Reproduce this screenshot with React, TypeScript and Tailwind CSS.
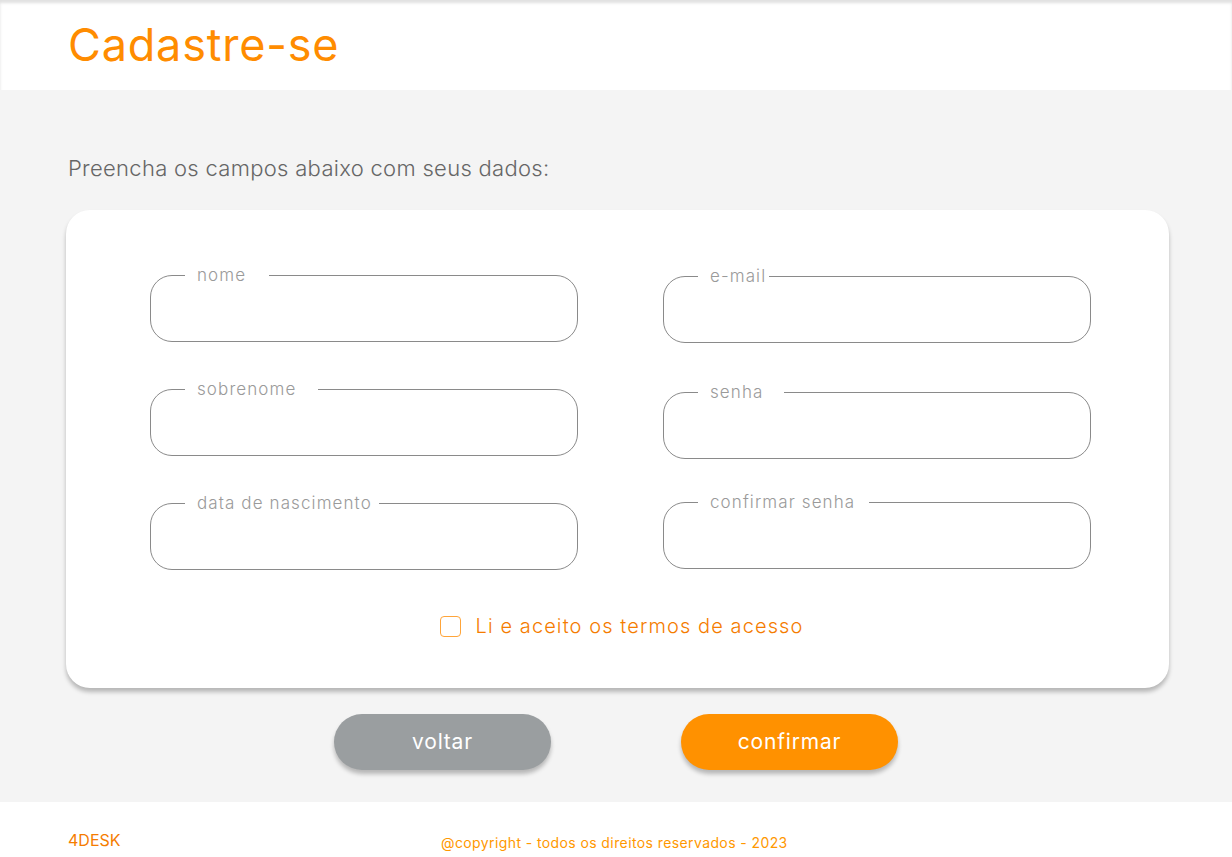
import React from "react";

const font = { fontFamily: "Inter, 'Open Sans', sans-serif" };

function Field({ label, pr, className = "" }: { label: string; pr: string; className?: string }) {
  return (
    <fieldset className={`h-[75px] rounded-[22px] border border-[#8a8a8a] px-[34px] ${className}`}>
      <legend className={`pl-[12px] ${pr} text-[17px] font-light leading-[16px] tracking-[1.1px] text-[#9a9a9a]`}>{label}</legend>
    </fieldset>
  );
}

export default function App() {
  return (
    <div style={font} className="min-h-[857px] w-full bg-white">
      <header className="h-[90px] bg-white shadow-[inset_0_3px_3px_rgba(0,0,0,0.12)] px-[68px] pt-[19px]">
        <h1 className="text-[45px] leading-[52px] font-normal tracking-[0.8px] text-[#ff8c00]">Cadastre-se</h1>
      </header>
      <main className="h-[712px] bg-[#f4f4f4] px-[66px] pt-[64px]">
        <p className="pl-[2px] text-[22px] font-light leading-[28px] tracking-[0.3px] text-[#666666]">Preencha os campos abaixo com seus dados:</p>
        <div className="mt-[28px] h-[478px] w-[1103px] rounded-[24px] bg-white shadow-[0_4px_4px_rgba(0,0,0,0.25)] pt-[57px]">
          <div className="grid grid-cols-[428px_428px] gap-x-[85px] pl-[84px]">
            <div className="flex flex-col gap-[39px]">
              <Field label="nome" pr="pr-[23px]" />
              <Field label="sobrenome" pr="pr-[22px]" />
              <Field label="data de nascimento" pr="pr-[7px]" />
            </div>
            <div className="flex flex-col">
              <Field label="e-mail" pr="pr-[3px]" className="mt-[1px]" />
              <Field label="senha" pr="pr-[21px]" className="mt-[41px]" />
              <Field label="confirmar senha" pr="pr-[14px]" className="mt-[35px]" />
            </div>
          </div>
          <div className="mt-[42px] flex items-center justify-center gap-[15px] pl-[8px]">
            <div className="h-[21px] w-[21px] rounded-[4px] border border-[#ffa53a] bg-white" />
            <span className="text-[20px] font-light leading-[28px] tracking-[1.1px] text-[#f57c00]">Li e aceito os termos de acesso</span>
          </div>
        </div>
        <div className="mt-[26px] flex justify-center gap-[130px]">
          <button className="h-[56px] w-[217px] rounded-full bg-[#9a9ea0] text-[21px] tracking-[0.8px] text-white shadow-[0_4px_4px_rgba(0,0,0,0.25)]">voltar</button>
          <button className="h-[56px] w-[217px] rounded-full bg-[#ff9100] text-[21px] tracking-[0.8px] text-white shadow-[0_4px_4px_rgba(0,0,0,0.25)]">confirmar</button>
        </div>
      </main>
      <footer className="relative h-[55px] bg-white px-[68px] pt-[26px]">
        <span className="text-[16px] leading-[20px] text-[#f57c00]">4DESK</span>
        <span className="absolute left-[441px] top-[31px] text-[14px] leading-[20px] tracking-[0.4px] text-[#ff9800]">@copyright - todos os direitos reservados - 2023</span>
      </footer>
    </div>
  );
}
